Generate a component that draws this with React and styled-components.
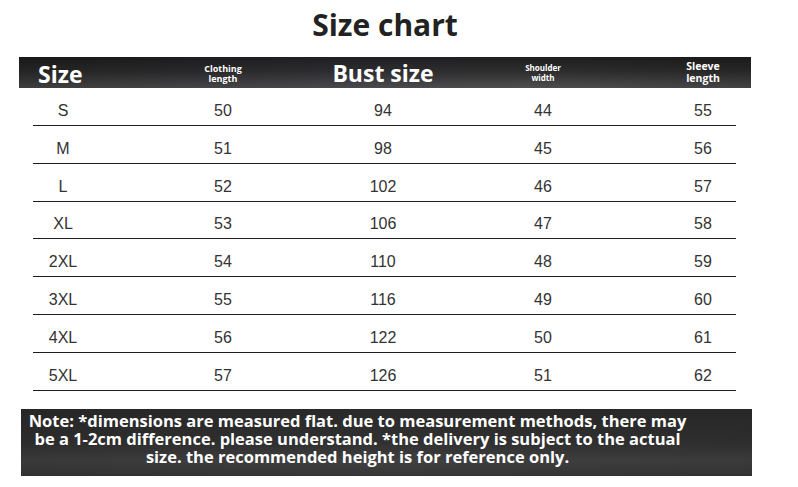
import React from "react";
import styled, { createGlobalStyle } from "styled-components";

const GlobalStyle = createGlobalStyle`
  html, body {
    margin: 0;
    padding: 0;
    background: #ffffff;
  }
`;

const Page = styled.div`
  width: 798px;
  height: 487px;
  background: #fff;
  overflow: hidden;
`;

const Title = styled.h1`
  margin: 0;
  height: 57px;
  line-height: 50px;
  text-align: center;
  font-family: "Open Sans", sans-serif;
  font-weight: 700;
  font-size: 30px;
  color: #222;
  padding-right: 28px;
`;

const Chart = styled.div`
  width: 732px;
  margin-left: 19px;
`;

const HeaderBar = styled.div`
  display: grid;
  grid-template-columns: 124px 160px 160px 160px 128px;
  height: 31px;
  align-items: center;
  color: #fff;
  font-family: "Open Sans", sans-serif;
  font-weight: 700;
  background:
    linear-gradient(90deg, rgba(0, 0, 0, 0.2) 0%, rgba(40, 40, 70, 0.12) 45%, rgba(0, 0, 0, 0) 70%, rgba(0, 0, 0, 0.15) 100%),
    linear-gradient(180deg, #1f1f1f 0%, #2d2d2d 45%, #4e4e4e 100%);
`;

const HeadCell = styled.div`
  text-align: center;
  font-size: ${(p) => p.$size}px;
  line-height: ${(p) => p.$lh}px;
  padding-top: ${(p) => p.$top || 0}px;
  &:first-child {
    text-align: left;
    padding-left: 19px;
  }
  &:last-child {
    padding-left: 32px;
  }
`;

const Row = styled.div`
  display: grid;
  grid-template-columns: 110px 160px 160px 160px 113px;
  height: 36.85px;
  margin: 0 15px 0 14px;
  align-items: center;
  font-family: "Liberation Sans", Arial, sans-serif;
  font-size: 16px;
  color: #333;
  border-bottom: 1px solid #1e1e1e;
`;

const Cell = styled.div`
  text-align: center;
  padding-top: 9px;
  &:first-child {
    padding-right: 50px;
  }
  &:last-child {
    padding-left: 47px;
  }
`;

const NoteBox = styled.div`
  width: 731px;
  height: 67px;
  margin: 18px 0 0 21px;
  box-sizing: border-box;
  padding: 3px 58px 0 0;
  text-align: center;
  color: #fff;
  font-family: "Open Sans", sans-serif;
  font-weight: 700;
  font-size: 16.5px;
  line-height: 18px;
  white-space: nowrap;
  background:
    linear-gradient(90deg, rgba(0, 0, 0, 0.1) 0%, rgba(0, 0, 0, 0) 50%, rgba(0, 0, 0, 0.08) 100%),
    linear-gradient(180deg, #2a2a2a 0%, #313131 50%, #404040 78%, #363636 100%);
`;

const heads = [
  { label: "Size", size: 23, lh: 26, top: 2 },
  { label: ["Clothing", "length"], size: 9, lh: 10, top: 2 },
  { label: "Bust size", size: 23, lh: 26, top: 0 },
  { label: ["Shoulder", "width"], size: 8, lh: 10, top: 0 },
  { label: ["Sleeve", "length"], size: 10.5, lh: 11.5, top: 0 },
];

const data = [
  ["S", 50, 94, 44, 55],
  ["M", 51, 98, 45, 56],
  ["L", 52, 102, 46, 57],
  ["XL", 53, 106, 47, 58],
  ["2XL", 54, 110, 48, 59],
  ["3XL", 55, 116, 49, 60],
  ["4XL", 56, 122, 50, 61],
  ["5XL", 57, 126, 51, 62],
];

export default function App() {
  return (
    <Page>
      <GlobalStyle />
      <Title>Size chart</Title>
      <Chart>
        <HeaderBar>
          {heads.map((h, i) => (
            <HeadCell key={i} $size={h.size} $lh={h.lh} $top={h.top}>
              {Array.isArray(h.label) ? (
                <>
                  {h.label[0]}
                  <br />
                  {h.label[1]}
                </>
              ) : (
                h.label
              )}
            </HeadCell>
          ))}
        </HeaderBar>
        {data.map((r) => (
          <Row key={r[0]}>
            {r.map((v, i) => (
              <Cell key={i}>{v}</Cell>
            ))}
          </Row>
        ))}
      </Chart>
      <NoteBox>
        Note: *dimensions are measured flat. due to measurement methods, there may
        <br />
        be a 1-2cm difference. please understand. *the delivery is subject to the actual
        <br />
        size. the recommended height is for reference only.
      </NoteBox>
    </Page>
  );
}
